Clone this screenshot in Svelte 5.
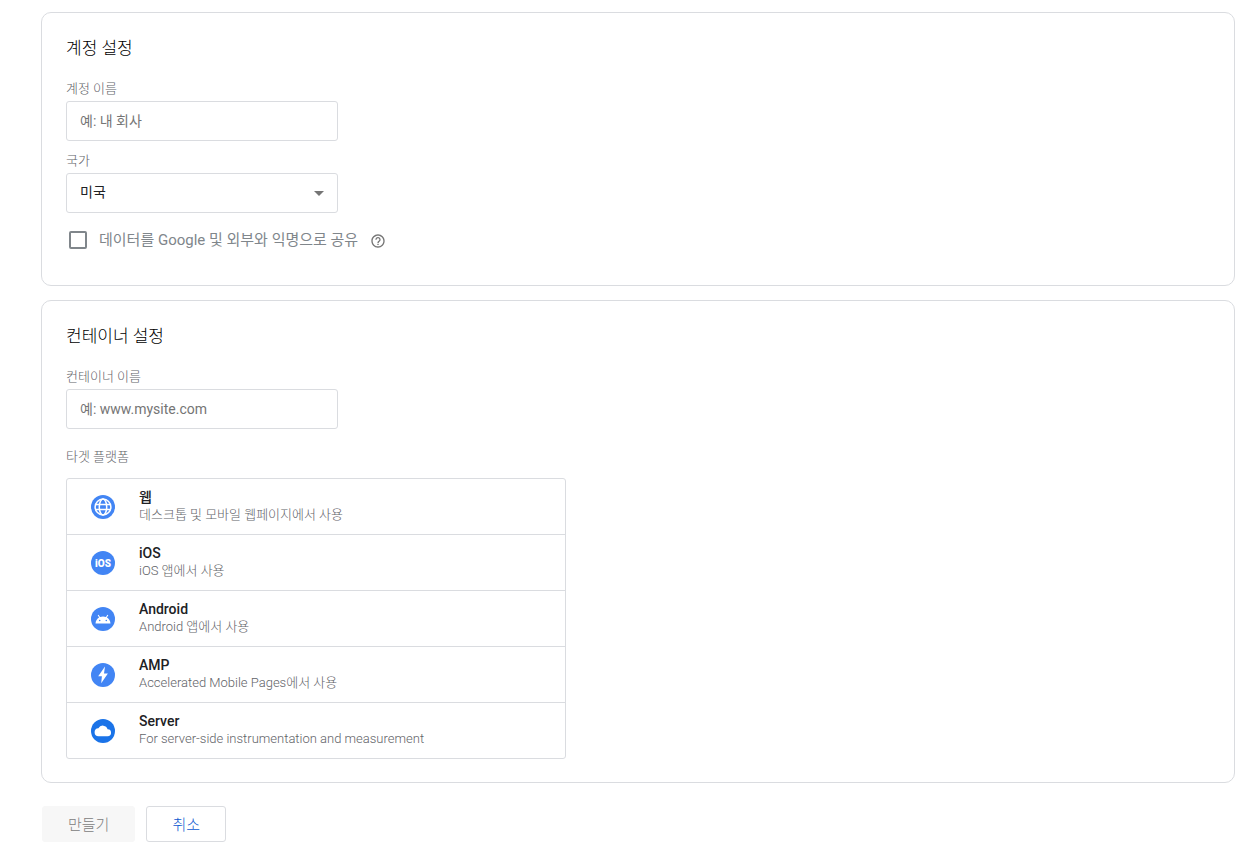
<script lang="ts">
  interface Platform {
    id: string;
    name: string;
    description: string;
  }

  const platforms: Platform[] = [
    { id: 'web', name: '웹', description: '데스크톱 및 모바일 웹페이지에서 사용' },
    { id: 'ios', name: 'iOS', description: 'iOS 앱에서 사용' },
    { id: 'android', name: 'Android', description: 'Android 앱에서 사용' },
    { id: 'amp', name: 'AMP', description: 'Accelerated Mobile Pages에서 사용' },
    { id: 'server', name: 'Server', description: 'For server-side instrumentation and measurement' },
  ];

  let accountName = $state('');
  let country = $state('US');
  let shareData = $state(false);
  let containerName = $state('');
  let platform = $state('');

  const ready = $derived(accountName !== '' && containerName !== '' && platform !== '');

  function reset(): void {
    accountName = '';
    country = 'US';
    shareData = false;
    containerName = '';
    platform = '';
  }
</script>

{#snippet platformIcon(id: string)}
  <svg class="platform-icon" class:server={id === 'server'} viewBox="0 0 24 24" aria-hidden="true">
    <circle class="disc" cx="12" cy="12" r="12" />
    {#if id === 'web'}
      <g fill="none" stroke="#fff" stroke-width="1.5">
        <circle cx="12" cy="12" r="7.9" />
        <ellipse cx="12" cy="12" rx="3.7" ry="7.9" />
        <path d="M4.7 9.4h14.6M4.7 14.6h14.6" />
      </g>
    {:else if id === 'ios'}
      <text class="ios-mark" x="12" y="16" text-anchor="middle">iOS</text>
    {:else if id === 'android'}
      <path
        fill="#fff"
        d="M4.5 16.5c.2-2.6 1.5-4.7 3.6-5.9L6.7 8.3l.9-.5L9 10.1c2-.8 4-.8 6 0l1.4-2.3.9.5-1.4 2.3c2.1 1.2 3.4 3.3 3.6 5.9z"
      />
      <circle class="disc" cx="8.7" cy="13.5" r=".8" />
      <circle class="disc" cx="15.3" cy="13.5" r=".8" />
    {:else if id === 'amp'}
      <path fill="#fff" d="M14 3.5 7.2 13.2h3.7l-.7 7 6.7-9.8H13z" />
    {:else}
      <path
        fill="#fff"
        d="M16.6 10.300A5 5 0 0 0 7.400 9.200 4 4 0 0 0 7.800 17.200h8.800a3.450 3.450 0 0 0 0-6.900z"
      />
    {/if}
  </svg>
{/snippet}

<main>
  <form onsubmit={(e) => e.preventDefault()}>
    <section class="card">
      <h2>계정 설정</h2>
      <div class="field">
        <label for="account-name">계정 이름</label>
        <input id="account-name" class="box" type="text" placeholder="예: 내 회사" bind:value={accountName} />
      </div>
      <div class="field">
        <label for="country">국가</label>
        <div class="select-wrap">
          <select id="country" class="box" bind:value={country}>
            <option value="US">미국</option>
            <option value="KR">대한민국</option>
            <option value="JP">일본</option>
          </select>
          <svg class="caret" viewBox="0 0 10 5" aria-hidden="true"><path d="M0 0h10L5 5z" /></svg>
        </div>
      </div>
      <div class="share">
        <input id="share-data" type="checkbox" bind:checked={shareData} />
        <label for="share-data">데이터를 Google 및 외부와 익명으로 공유</label>
        <button class="help" type="button" aria-label="도움말">
          <svg viewBox="0 0 24 24" aria-hidden="true">
            <path
              d="M11 18h2v-2h-2v2zm1-16C6.480 2 2 6.480 2 12s4.480 10 10 10 10-4.480 10-10S17.520 2 12 2zm0 18c-4.410 0-8-3.590-8-8s3.590-8 8-8 8 3.590 8 8-3.590 8-8 8zm0-14c-2.210 0-4 1.790-4 4h2c0-1.100.9-2 2-2s2 .9 2 2c0 2-3 1.750-3 5h2c0-2.250 3-2.500 3-5 0-2.210-1.790-4-4-4z"
            />
          </svg>
        </button>
      </div>
    </section>

    <section class="card">
      <h2>컨테이너 설정</h2>
      <div class="field">
        <label for="container-name">컨테이너 이름</label>
        <input
          id="container-name"
          class="box"
          type="text"
          placeholder="예: www.mysite.com"
          bind:value={containerName}
        />
      </div>
      <fieldset>
        <legend>타겟 플랫폼</legend>
        <div class="platforms">
          {#each platforms as p (p.id)}
            <label class="platform" class:selected={platform === p.id}>
              <input type="radio" name="platform" value={p.id} bind:group={platform} />
              {@render platformIcon(p.id)}
              <span class="platform-text">
                <span class="platform-name">{p.name}</span>
                <span class="platform-desc">{p.description}</span>
              </span>
            </label>
          {/each}
        </div>
      </fieldset>
    </section>

    <div class="actions">
      <button class="create" type="submit" disabled={!ready}>만들기</button>
      <button class="cancel" type="button" onclick={reset}>취소</button>
    </div>
  </form>
</main>

<style>
  :global(body) {
    background: #fff;
  }
  main {
    padding: 12px 7px 4px 41px;
    font-family: Roboto, 'Noto Sans CJK KR', sans-serif;
    font-size: 14px;
    color: #202124;
  }
  input,
  select,
  button {
    font: inherit;
    color: inherit;
  }
  .card {
    box-sizing: border-box;
    margin-bottom: 14px;
    padding: 24px 24px 23px;
    border: 1px solid #dadce0;
    border-radius: 10px;
  }
  h2 {
    margin: 0 0 18px;
    font-size: 17px;
    font-weight: 300;
    line-height: 22px;
    color: #000;
  }
  .field {
    width: 272px;
    max-width: 100%;
    margin-bottom: 8px;
  }
  .field label,
  legend {
    display: block;
    padding: 0;
    font-size: 13px;
    font-weight: 300;
    line-height: 24px;
    color: #5f6368;
  }
  .box {
    display: block;
    box-sizing: border-box;
    width: 100%;
    height: 40px;
    padding: 0 13px;
    border: 1px solid #dadce0;
    border-radius: 3px;
    background: #fff;
  }
  .box::placeholder {
    color: #757575;
    opacity: 1;
  }
  .box:focus {
    outline: none;
    border-color: #4285f4;
  }
  .select-wrap {
    position: relative;
  }
  select.box {
    appearance: none;
    padding-bottom: 3px;
  }
  .caret {
    position: absolute;
    top: 18px;
    right: 14px;
    width: 10px;
    height: 5px;
    fill: #757575;
    pointer-events: none;
  }
  .share {
    display: flex;
    align-items: center;
    height: 24px;
    margin: 15px 0 10px;
    padding: 0 3px;
    font-size: 15px;
    line-height: 24px;
    color: #80868b;
  }
  .share input {
    appearance: none;
    box-sizing: border-box;
    width: 18px;
    height: 18px;
    margin: 0 12px 0 0;
    border: 2px solid #80868b;
    border-radius: 2px;
  }
  .share input:checked {
    border-color: #1a73e8;
    background: #1a73e8;
  }
  .help {
    display: flex;
    margin-left: 12px;
    padding: 2px 0 0;
    border: 0;
    background: none;
    cursor: pointer;
  }
  .help svg {
    width: 16px;
    height: 16px;
    fill: #757575;
  }
  fieldset {
    min-width: 0;
    margin: 16px 0 0;
    padding: 0;
    border: 0;
  }
  .platforms {
    box-sizing: border-box;
    width: 500px;
    max-width: 100%;
    margin-top: 9px;
    border: 1px solid #dadce0;
    border-radius: 3px;
  }
  .platform {
    display: flex;
    align-items: center;
    gap: 24px;
    height: 55px;
    padding: 0 24px;
    cursor: pointer;
  }
  .platform + .platform {
    border-top: 1px solid #dadce0;
  }
  .platform.selected {
    background: #e8f0fe;
  }
  .platform:focus-within {
    outline: 2px solid #1a73e8;
  }
  .platform input {
    position: absolute;
    opacity: 0;
    pointer-events: none;
  }
  .platform-icon {
    flex: none;
    width: 24px;
    height: 24px;
  }
  .disc {
    fill: #4285f4;
  }
  .server .disc {
    fill: #1a73e8;
  }
  .ios-mark {
    font-size: 10px;
    font-weight: 900;
    fill: #fff;
  }
  .platform-text {
    display: flex;
    flex-direction: column;
    padding-bottom: 2px;
    line-height: 18px;
  }
  .platform-name {
    font-weight: 500;
  }
  .platform-desc {
    font-size: 13px;
    font-weight: 300;
    color: #5f6368;
  }
  .actions {
    display: flex;
    gap: 11px;
    margin: 23px 0 0 1px;
  }
  .actions button {
    height: 36px;
    padding: 0 25px 2px;
    border: 1px solid #dadce0;
    border-radius: 3px;
    background: #fff;
    font-size: 15px;
    font-weight: 300;
    cursor: pointer;
  }
  .actions .cancel {
    color: #0b57d0;
  }
  .actions .create {
    border-color: #1a73e8;
    background: #1a73e8;
    color: #fff;
  }
  .actions .create:disabled {
    border-color: #f7f7f7;
    background: #f7f7f7;
    color: #808080;
    cursor: default;
  }
</style>
